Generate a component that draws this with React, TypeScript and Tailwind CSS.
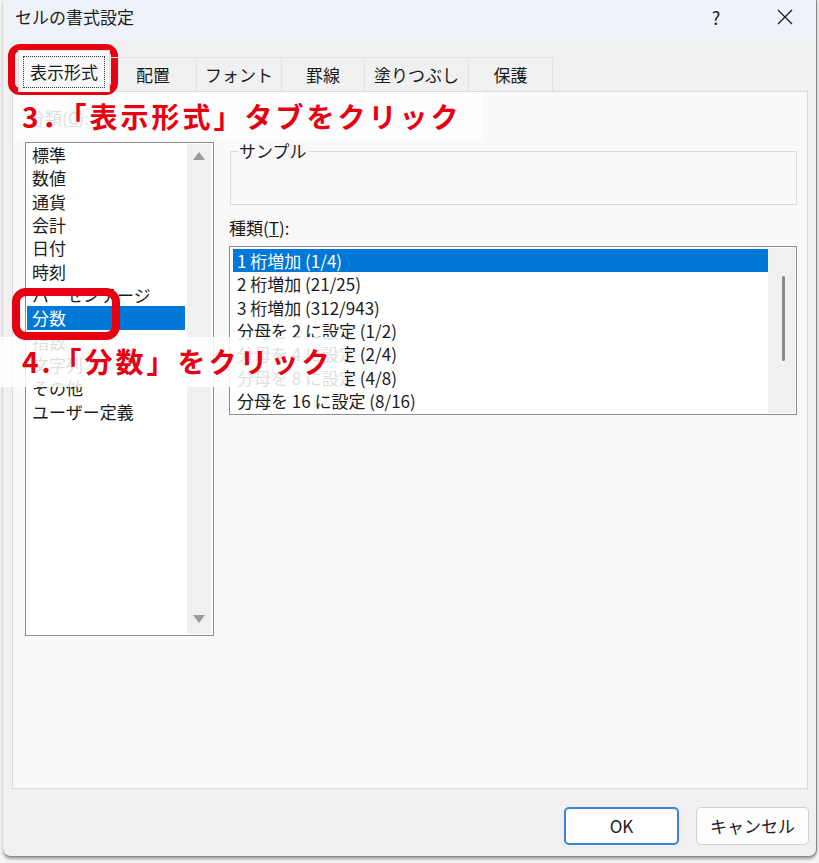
const categories = [
  '標準',
  '数値',
  '通貨',
  '会計',
  '日付',
  '時刻',
  'パーセンテージ',
  '分数',
  '指数',
  '文字列',
  'その他',
  'ユーザー定義',
]

const fractionTypes = [
  '1 桁増加 (1/4)',
  '2 桁増加 (21/25)',
  '3 桁増加 (312/943)',
  '分母を 2 に設定 (1/2)',
  '分母を 4 に設定 (2/4)',
  '分母を 8 に設定 (4/8)',
  '分母を 16 に設定 (8/16)',
]

const tabs = [
  { label: '配置', width: 'w-[87px]' },
  { label: 'フォント', width: 'w-[85px]' },
  { label: '罫線', width: 'w-[83px]' },
  { label: '塗りつぶし', width: 'w-[104px]' },
  { label: '保護', width: 'w-[84px]' },
]

export default function App() {
  return (
    <div className="relative h-[863px] w-[819px] overflow-hidden bg-[#f4f4f4] font-['Noto_Sans_CJK_JP','Noto_Sans',sans-serif] text-[#1b1b1b]">
      <div className="ml-[3px] flex h-[857px] w-[814px] flex-col overflow-hidden rounded-b-[8px] border-r border-b border-[#8a8a8a] bg-[#f0f0f0] shadow-[0_2px_3px_rgba(0,0,0,0.35)]">
        <TitleBar />
        <TabStrip />
        <Panel />
        <Footer />
      </div>

      {/* step annotations */}
      <div className="absolute top-[92px] left-[15px] h-[48px] w-[467px] bg-white/85 pl-[7px] text-[28px] leading-[48px] font-bold tracking-[3px] text-[#e60012]">
        3．「表示形式」タブをクリック
      </div>
      <div className="absolute top-[337px] left-0 h-[50px] w-[345px] bg-white/85 pl-[22px] text-[28px] leading-[48px] font-bold tracking-[3px] text-[#e60012]">
        4.「分数」をクリック
      </div>
      <div className="absolute top-[44px] left-[8px] h-[51px] w-[110px] rounded-[12px] border-[7px] border-[#e60012]" />
      <div className="absolute top-[288px] left-[12px] h-[52px] w-[108px] rounded-[14px] border-[8px] border-[#e60012]" />
    </div>
  )
}

function TitleBar() {
  return (
    <div className="flex h-[40px] shrink-0 items-center justify-between bg-[#eef2f9] pb-[6px] pl-[12px] pr-[8px]">
      <span className="text-[17px]">セルの書式設定</span>
      <div className="flex items-center">
        <span className="w-[46px] text-center text-[18px]">?</span>
        <span className="ml-[23px] flex w-[46px] justify-center">
          <svg width="16" height="16" viewBox="0 0 16 16" fill="none" stroke="#1b1b1b" strokeWidth="1.3">
            <path d="M1 1 L15 15 M15 1 L1 15" />
          </svg>
        </span>
      </div>
    </div>
  )
}

function TabStrip() {
  return (
    <div className="relative z-10 flex h-[51px] shrink-0 items-end pl-[15px]">
      <div className="-mb-px flex h-[42px] w-[92px] items-center justify-center border-x border-t border-[#dcdcdc] bg-[#f9f9f9]">
        <span className="border border-dotted border-[#333] px-[6px] text-[17px] leading-[30px]">
          表示形式
        </span>
      </div>
      {tabs.map((tab) => (
        <div
          key={tab.label}
          className={`flex h-[34px] ${tab.width} items-center justify-center border-t border-r border-[#e2e2e2] text-[17px]`}
        >
          {tab.label}
        </div>
      ))}
    </div>
  )
}

function Panel() {
  return (
    <div className="ml-[9px] flex h-[698px] w-[796px] shrink-0 gap-[15px] border border-[#dcdcdc] bg-[#f9f9f9] pt-[16px] pl-[12px]">
      <div className="w-[189px]">
        <p className="ml-[3px] text-[17px] leading-[20px]">
          分類(<span className="underline">C</span>):
        </p>
        <div className="mt-[14px] flex h-[494px] border border-[#8e8e8e] bg-white">
          <div className="flex-1 pr-[2px] pl-[1px]">
            {categories.map((c) => (
              <div
                key={c}
                className={`h-[23.33px] px-[5px] text-[17px] leading-[23.33px] ${
                  c === '分数' ? 'bg-[#0078d7] text-white' : ''
                }`}
              >
                {c}
              </div>
            ))}
          </div>
          <div className="my-px mr-[2px] flex w-[24px] flex-col items-center justify-between bg-[#f0f0f0] pt-[8px] pb-[11px]">
            <svg width="12" height="8" viewBox="0 0 12 8">
              <path d="M6 0 L12 8 L0 8 Z" fill="#9c9c9c" />
            </svg>
            <svg width="12" height="8" viewBox="0 0 12 8">
              <path d="M0 0 L12 0 L6 8 Z" fill="#9c9c9c" />
            </svg>
          </div>
        </div>
      </div>

      <div className="w-[568px]">
        <fieldset className="mt-[33px] ml-px h-[64px] w-[567px] border border-[#dcdcdc] px-[7px]">
          <legend className="px-px text-[17px] leading-[20px]">サンプル</legend>
        </fieldset>
        <p className="mt-[13px] text-[17px] leading-[20px]">
          種類(<span className="underline">T</span>):
        </p>
        <div className="mt-[8px] flex h-[169px] border border-[#8e8e8e] bg-white">
          <div className="flex-1 pt-[2px] pl-[3px]">
            {fractionTypes.map((t, i) => (
              <div
                key={t}
                className={`h-[23.33px] px-[4px] text-[17px] leading-[23.33px] ${
                  i === 0 ? 'bg-[#0078d7] text-white' : ''
                }`}
              >
                {t}
              </div>
            ))}
          </div>
          <div className="my-px mr-px w-[27px] bg-[#f0f0f0] pt-[28px] pl-[14px]">
            <div className="h-[85px] w-[3px] rounded-full bg-[#8a8a8a]" />
          </div>
        </div>
      </div>
    </div>
  )
}

function Footer() {
  return (
    <div className="flex justify-end gap-[17px] pt-[18px] pr-[7px]">
      <button className="h-[38px] w-[115px] rounded-[5px] border-2 border-[#3a84d4] bg-white text-[17px]">
        OK
      </button>
      <button className="h-[38px] w-[113px] rounded-[5px] border border-[#d0d0d0] bg-[#fdfdfd] text-[17px]">
        キャンセル
      </button>
    </div>
  )
}
